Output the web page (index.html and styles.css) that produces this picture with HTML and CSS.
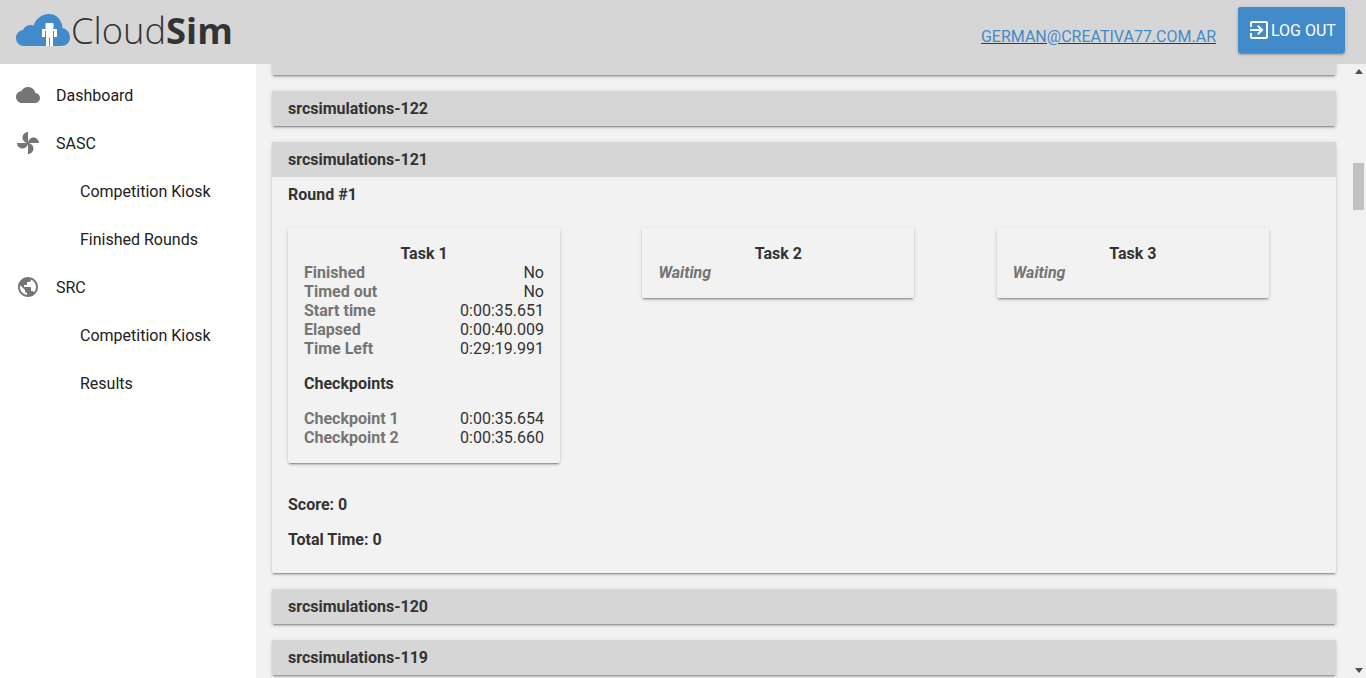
FILE: index.html
```html
<!DOCTYPE html>
<html lang="en">
<head>
  <meta charset="UTF-8">
  <title>CloudSim</title>
  <link rel="stylesheet" href="styles.css">
</head>
<body>
  <header class="topbar">
    <div class="logo">
      <svg class="logo-cloud" viewBox="0 0 54 32" width="54" height="32">
        <path fill="#428aca" d="M8 32C3.500 32 0 28.500 0 24C0 19.800 3 16.500 7 16C8.300 13 11 11 14.500 11C15.500 11 16.500 11.200 17.500 11.500C20 4.500 26 0 33 0C40.500 0 46 6 46.500 14C50.800 15 54 18.800 54 23.500C54 28.500 50 32 45 32Z"/>
        <g fill="#fff">
          <rect x="29.500" y="9" width="8" height="6" rx="1"/>
          <rect x="26" y="15" width="15" height="2"/>
          <rect x="26" y="15" width="3" height="8"/>
          <rect x="38" y="15" width="3" height="8"/>
          <rect x="30" y="15" width="7" height="9"/>
          <rect x="30" y="24" width="3" height="8"/>
          <rect x="34" y="24" width="3" height="8"/>
        </g>
      </svg>
      <span class="logo-text">Cloud<b>Sim</b></span>
    </div>
    <div class="account">
      <a class="account-link" href="#">GERMAN@CREATIVA77.COM.AR</a>
      <button class="logout" type="button">
        <svg viewBox="0 0 24 24" width="24" height="24"><path fill="#fff" d="M10.09 15.59L11.5 17l5-5-5-5-1.41 1.41L12.67 11H3v2h9.67l-2.58 2.59zM19 3H5c-1.11 0-2 .9-2 2v4h2V5h14v14H5v-4H3v4c0 1.1.89 2 2 2h14c1.100 0 2-.9 2-2V5c0-1.100-.9-2-2-2z"/></svg>
        LOG OUT
      </button>
    </div>
  </header>

  <div class="layout">
    <nav class="sidebar">
      <a class="nav-item" href="#">
        <svg viewBox="0 0 24 24" width="24" height="24"><path d="M19.35 10.04C18.67 6.59 15.64 4 12 4 9.11 4 6.6 5.64 5.35 8.04 2.34 8.36 0 10.91 0 14c0 3.31 2.69 6 6 6h13c2.76 0 5-2.24 5-5 0-2.64-2.05-4.78-4.65-4.96z"/></svg>
        Dashboard
      </a>
      <a class="nav-item" href="#">
        <svg viewBox="0 0 24 24" width="24" height="24"><path d="M12 12c0-3 2.500-5.500 5.500-5.500S23 9 23 12H12zm0 0c0 3-2.500 5.500-5.500 5.500S1 15 1 12h11zm0 0c-3 0-5.500-2.500-5.500-5.500S9 1 12 1v11zm0 0c3 0 5.500 2.500 5.500 5.500S15 23 12 23V12z"/></svg>
        SASC
      </a>
      <a class="nav-item nav-sub" href="#">Competition Kiosk</a>
      <a class="nav-item nav-sub" href="#">Finished Rounds</a>
      <a class="nav-item" href="#">
        <svg viewBox="0 0 24 24" width="24" height="24"><path d="M12 2C6.48 2 2 6.48 2 12s4.48 10 10 10 10-4.48 10-10S17.52 2 12 2zm-1 17.93c-3.95-.49-7-3.85-7-7.93 0-.62.08-1.21.21-1.79L9 15v1c0 1.1.9 2 2 2v1.93zm6.9-2.54c-.26-.81-1-1.39-1.9-1.39h-1v-3c0-.55-.45-1-1-1H8v-2h2c.55 0 1-.45 1-1V7h2c1.1 0 2-.9 2-2v-.41c2.93 1.19 5 4.06 5 7.41 0 2.08-.8 3.97-2.1 5.39z"/></svg>
        SRC
      </a>
      <a class="nav-item nav-sub" href="#">Competition Kiosk</a>
      <a class="nav-item nav-sub" href="#">Results</a>
    </nav>

    <main class="content">
      <section class="panel panel-first">
        <div class="panel-title"></div>
      </section>
      <section class="panel">
        <h2 class="panel-title">srcsimulations-122</h2>
      </section>
      <section class="panel">
        <h2 class="panel-title">srcsimulations-121</h2>
        <div class="panel-body">
          <p class="round-title">Round #1</p>
          <div class="tasks">
            <div class="task">
              <h3 class="task-title">Task 1</h3>
              <div class="row"><span class="label">Finished</span><span>No</span></div>
              <div class="row"><span class="label">Timed out</span><span>No</span></div>
              <div class="row"><span class="label">Start time</span><span>0:00:35.651</span></div>
              <div class="row"><span class="label">Elapsed</span><span>0:00:40.009</span></div>
              <div class="row"><span class="label">Time Left</span><span>0:29:19.991</span></div>
              <h4 class="checkpoints">Checkpoints</h4>
              <div class="row"><span class="label">Checkpoint 1</span><span>0:00:35.654</span></div>
              <div class="row"><span class="label">Checkpoint 2</span><span>0:00:35.660</span></div>
            </div>
            <div class="task">
              <h3 class="task-title">Task 2</h3>
              <div class="waiting">Waiting</div>
            </div>
            <div class="task">
              <h3 class="task-title">Task 3</h3>
              <div class="waiting">Waiting</div>
            </div>
          </div>
          <p class="summary">Score: 0</p>
          <p class="summary">Total Time: 0</p>
        </div>
      </section>
      <section class="panel">
        <h2 class="panel-title">srcsimulations-120</h2>
      </section>
      <section class="panel">
        <h2 class="panel-title">srcsimulations-119</h2>
      </section>
    </main>

    <div class="scrollbar">
      <span class="arrow arrow-up"></span>
      <span class="thumb"></span>
      <span class="arrow arrow-down"></span>
    </div>
  </div>
</body>
</html>
```

FILE: styles.css
```css
* {
  box-sizing: border-box;
}

html, body {
  height: 100%;
}

body {
  margin: 0;
  overflow: hidden;
  display: flex;
  flex-direction: column;
  font-family: Roboto, sans-serif;
  font-size: 16px;
  color: #333;
  background-color: #fff;
}

.topbar {
  height: 64px;
  flex: none;
  display: flex;
  justify-content: space-between;
  align-items: flex-start;
  padding: 0 21px 0 16px;
  background-color: #d6d6d6;
}

.logo {
  display: flex;
  align-items: center;
  gap: 1px;
  padding-top: 10px;
}

.logo-cloud {
  display: block;
}

.logo-text {
  font-family: "Open Sans", sans-serif;
  font-size: 36.3px;
  font-weight: 300;
  line-height: 40px;
  color: #333;
}

.logo-text b {
  font-weight: 700;
}

.account {
  display: flex;
  align-items: flex-start;
  gap: 22px;
  padding-top: 7px;
}

.account-link {
  margin-top: 20px;
  line-height: 19px;
  color: #428aca;
  text-decoration-color: #551a8b;
}

.logout {
  height: 46px;
  width: 107px;
  padding: 0 0 0 9px;
  display: flex;
  align-items: center;
  border: 0;
  border-radius: 2px;
  font-family: Roboto, sans-serif;
  font-size: 16px;
  color: #fff;
  background-color: #428aca;
  box-shadow: 0 3px 1px -2px rgba(0, 0, 0, 0.2), 0 2px 2px 0 rgba(0, 0, 0, 0.14), 0 1px 5px 0 rgba(0, 0, 0, 0.12);
  cursor: pointer;
}

.layout {
  flex: 1;
  min-height: 0;
  display: flex;
}

.sidebar {
  width: 256px;
  flex: none;
  padding-top: 7px;
  background-color: #fff;
}

.nav-item {
  height: 48px;
  display: flex;
  align-items: center;
  gap: 16px;
  padding-left: 16px;
  color: #212121;
  text-decoration: none;
}

.nav-item svg {
  fill: #757575;
  flex: none;
}

.nav-sub {
  padding-left: 80px;
}

.content {
  flex: 1;
  min-width: 0;
  overflow: hidden;
  padding: 0 15px 0 16px;
  background-color: #f2f2f2;
}

.panel {
  margin-bottom: 16px;
  background-color: #f2f2f2;
  border-radius: 2px;
  box-shadow: 0 3px 1px -2px rgba(0, 0, 0, 0.2), 0 2px 2px 0 rgba(0, 0, 0, 0.14), 0 1px 5px 0 rgba(0, 0, 0, 0.12);
}

.panel-first {
  margin-top: -24px;
}

.panel-title {
  margin: 0;
  height: 35px;
  padding: 0 16px;
  font-size: 16px;
  font-weight: 700;
  line-height: 35px;
  background-color: #d6d6d6;
}

.panel-body {
  padding: 8px 16px 8px;
}

.round-title {
  margin: 0 0 24px;
  font-weight: 700;
  line-height: 19px;
}

.tasks {
  display: grid;
  grid-template-columns: repeat(3, 272px);
  column-gap: 82.4px;
  align-items: start;
  margin-bottom: 32px;
}

.task {
  padding: 16px;
  background-color: #f2f2f2;
  border-radius: 2px;
  box-shadow: 0 3px 1px -2px rgba(0, 0, 0, 0.2), 0 2px 2px 0 rgba(0, 0, 0, 0.14), 0 1px 5px 0 rgba(0, 0, 0, 0.12);
}

.task-title {
  margin: 0;
  font-size: 16px;
  font-weight: 700;
  line-height: 19px;
  text-align: center;
}

.row {
  display: flex;
  justify-content: space-between;
  line-height: 19px;
}

.label {
  font-weight: 700;
  color: #757575;
}

.checkpoints {
  margin: 16px 0;
  font-size: 16px;
  font-weight: 700;
  line-height: 19px;
}

.waiting {
  font-style: italic;
  font-weight: 700;
  line-height: 19px;
  color: #757575;
}

.summary {
  margin: 0 0 16px;
  font-weight: 700;
  line-height: 19px;
}

.scrollbar {
  width: 15px;
  flex: none;
  display: flex;
  flex-direction: column;
  align-items: center;
  background-color: #f1f1f1;
}

.arrow {
  width: 0;
  height: 0;
  border-left: 4px solid transparent;
  border-right: 4px solid transparent;
}

.arrow-up {
  margin-top: 5px;
  border-bottom: 5px solid #505050;
}

.arrow-down {
  margin-top: auto;
  margin-bottom: 5px;
  border-top: 5px solid #505050;
}

.thumb {
  width: 11px;
  height: 47px;
  margin-top: 89px;
  background-color: #c1c1c1;
}
```
